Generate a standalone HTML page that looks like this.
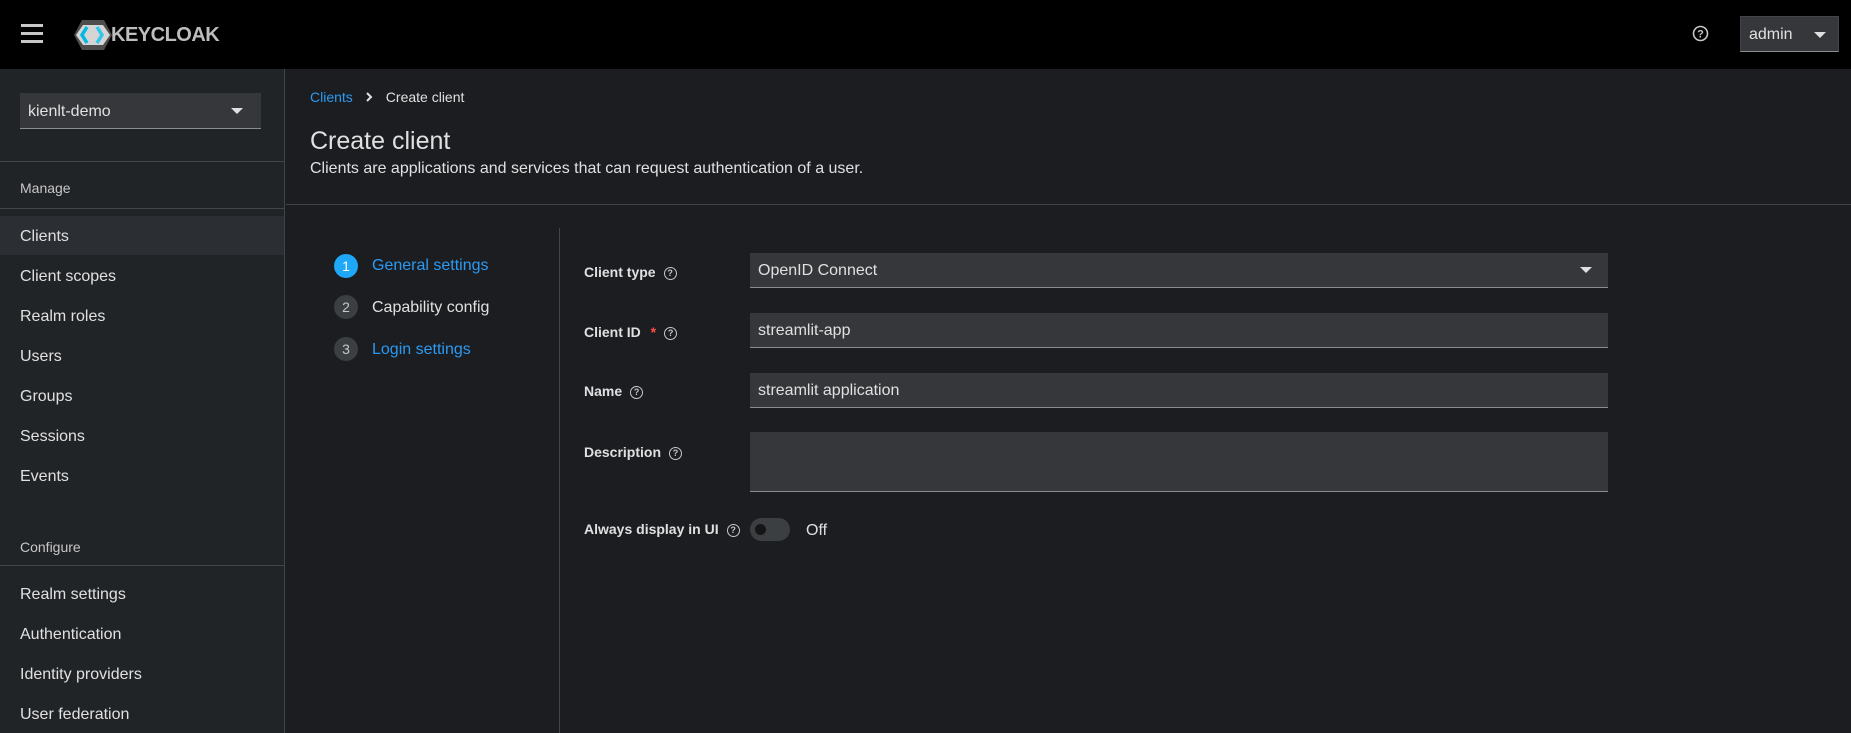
<!DOCTYPE html>
<html><head><meta charset="utf-8"><style>
*{box-sizing:border-box;margin:0;padding:0}
body{width:1851px;height:733px;overflow:hidden;background:#1b1d21;font-family:"Liberation Sans",sans-serif;color:#e0e0e0;position:relative}
.abs{position:absolute}
.hdr{left:0;top:0;width:1851px;height:69px;background:#000}
.side{left:0;top:69px;width:285px;height:664px;background:#212427;border-right:1px solid #444548}
.hr{position:absolute;height:1px;background:#444548}
.nav{position:absolute;left:20px;font-size:16px;color:#e0e0e0}
.sect{position:absolute;left:20px;font-size:14px;color:#c7c7c7}
.inp{position:absolute;left:750px;width:858px;background:#36373a;border-bottom:1px solid #8a8d90;font-size:16px;color:#e0e0e0;padding-left:8px}
.lbl{position:absolute;left:584px;font-size:14px;font-weight:bold;color:#e0e0e0}
.q{display:inline-block;width:13px;height:13px;border:1.5px solid #c7c7c7;border-radius:50%;font-size:9px;line-height:10px;text-align:center;color:#c7c7c7;font-weight:bold;vertical-align:middle;margin-left:8px}
.step{position:absolute;left:334px;width:24px;height:24px;border-radius:50%;background:#3c3f42;color:#c7c7c7;font-size:14px;text-align:center;line-height:24px}
.stxt{position:absolute;left:372px;font-size:16px}
.caret{display:inline-block;width:0;height:0;border-left:6px solid transparent;border-right:6px solid transparent;border-top:6px solid #e0e0e0}
</style></head><body>
<div class="abs hdr">
  <div class="abs" style="left:21px;top:24px;width:22px;height:3px;background:#c7c7c7"></div>
  <div class="abs" style="left:21px;top:32px;width:22px;height:3px;background:#c7c7c7"></div>
  <div class="abs" style="left:21px;top:40px;width:22px;height:3px;background:#c7c7c7"></div>
  <svg class="abs" style="left:73px;top:19px" width="40" height="32" viewBox="0 0 40 32">
    <polygon points="9,1 31,1 39,16 31,31 9,31 1,16" fill="#4d4d4d"/>
    <polygon points="3,16 10,6 30,6 37,16 30,26 10,26" fill="#d5d5d5"/>
    <path d="M14 8 L9 16 L14 24" stroke="#00b8e3" stroke-width="3.5" fill="none"/>
    <path d="M24 8 L29 16 L24 24" stroke="#33c6e9" stroke-width="3.5" fill="none"/>
  </svg>
  <div class="abs" style="left:111px;top:24px;font-size:20px;font-weight:bold;color:#bdbdbd;letter-spacing:-0.5px">KEYCLOAK</div>
  <svg class="abs" style="left:1692px;top:25px" width="17" height="17" viewBox="0 0 17 17"><circle cx="8.5" cy="8.5" r="7" stroke="#c7c7c7" stroke-width="1.6" fill="none"/><text x="8.5" y="12.5" font-size="11" font-weight="bold" text-anchor="middle" fill="#c7c7c7" font-family="Liberation Sans">?</text></svg>
  <div class="abs" style="left:1740px;top:16px;width:99px;height:36px;background:#36373a;border:1px solid #444548;border-bottom:1px solid #8a8d90;font-size:16px;padding:9px 0 0 8px">admin<span class="caret" style="position:absolute;left:73px;top:15px"></span></div>
</div>
<div class="abs side">
  <div class="abs" style="left:20px;top:24px;width:241px;height:36px;background:#36373a;border-bottom:1px solid #8a8d90;font-size:16px;padding:10px 0 0 8px">kienlt-demo<span class="caret" style="position:absolute;left:211px;top:15px"></span></div>
  <div class="hr" style="left:0;top:92px;width:285px"></div>
  <div class="sect" style="top:111px">Manage</div>
  <div class="hr" style="left:0;top:139px;width:285px"></div>
  <div class="abs" style="left:0;top:147px;width:284px;height:39px;background:#2b2e33"></div>
  <div class="nav" style="top:159px">Clients</div>
  <div class="nav" style="top:199px">Client scopes</div>
  <div class="nav" style="top:239px">Realm roles</div>
  <div class="nav" style="top:279px">Users</div>
  <div class="nav" style="top:319px">Groups</div>
  <div class="nav" style="top:359px">Sessions</div>
  <div class="nav" style="top:399px">Events</div>
  <div class="sect" style="top:470px">Configure</div>
  <div class="hr" style="left:0;top:496px;width:285px"></div>
  <div class="nav" style="top:517px">Realm settings</div>
  <div class="nav" style="top:557px">Authentication</div>
  <div class="nav" style="top:597px">Identity providers</div>
  <div class="nav" style="top:637px">User federation</div>
</div>
<div class="abs" style="left:310px;top:89px;font-size:14px"><span style="color:#2b9af3">Clients</span><svg width="8" height="10" viewBox="0 0 8 10" style="margin:0 13px 0 12px"><path d="M2 1 L6 5 L2 9" stroke="#e0e0e0" stroke-width="2" fill="none"/></svg>Create client</div>
<div class="abs" style="left:310px;top:127px;font-size:25px;color:#e0e0e0">Create client</div>
<div class="abs" style="left:310px;top:160px;font-size:16px">Clients are applications and services that can request authentication of a user.</div>
<div class="hr" style="left:286px;top:204px;width:1565px"></div>
<div class="abs" style="left:559px;top:228px;width:1px;height:505px;background:#444548"></div>
<div class="step" style="top:254px;background:#1fa7f8;color:#fff">1</div>
<div class="stxt" style="top:257px;color:#2b9af3">General settings</div>
<div class="step" style="top:295px">2</div>
<div class="stxt" style="top:299px;color:#e0e0e0">Capability config</div>
<div class="step" style="top:337px">3</div>
<div class="stxt" style="top:341px;color:#2b9af3">Login settings</div>

<div class="lbl" style="top:264px">Client type<span class="q">?</span></div>
<div class="inp" style="top:253px;height:35px;padding-top:9px">OpenID Connect<span class="caret" style="position:absolute;left:830px;top:14px"></span></div>
<div class="lbl" style="top:324px">Client ID <span style="color:#fe5142;margin-left:6px">*</span><span class="q">?</span></div>
<div class="inp" style="top:313px;height:35px;padding-top:9px">streamlit-app</div>
<div class="lbl" style="top:383px">Name<span class="q">?</span></div>
<div class="inp" style="top:373px;height:35px;padding-top:9px">streamlit application</div>
<div class="lbl" style="top:444px">Description<span class="q">?</span></div>
<div class="inp" style="top:432px;height:60px"></div>
<div class="lbl" style="top:521px">Always display in UI<span class="q">?</span></div>
<div class="abs" style="left:750px;top:518px;width:40px;height:23px;border-radius:12px;background:#3c3f42"><div class="abs" style="left:5px;top:6px;width:11px;height:11px;border-radius:50%;background:#151515"></div></div>
<div class="abs" style="left:806px;top:522px;font-size:16px">Off</div>
</body></html>
